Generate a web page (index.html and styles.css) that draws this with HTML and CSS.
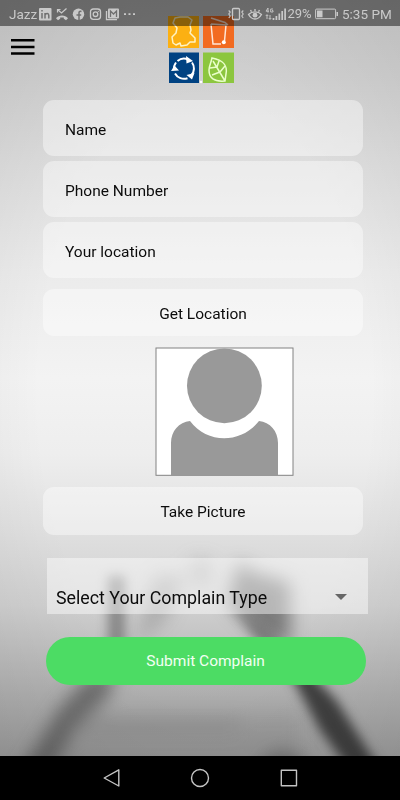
FILE: index.html
```
<!DOCTYPE html>
<html lang="en">
<head>
<meta charset="utf-8">
<title>Submit Complain</title>
<link rel="stylesheet" href="styles.css">
</head>
<body>
<div class="screen">
  <svg class="backdrop" viewBox="0 0 400 756" aria-hidden="true">
    <defs>
      <linearGradient id="sky" x1="0" y1="0" x2="0" y2="1">
        <stop offset="0" stop-color="#c9c9c9"/>
        <stop offset=".1" stop-color="#d1d1d1"/>
        <stop offset=".22" stop-color="#dedede"/>
        <stop offset=".36" stop-color="#ebebeb"/>
        <stop offset=".5" stop-color="#f3f3f3"/>
        <stop offset=".6" stop-color="#eeeeee"/>
        <stop offset=".7" stop-color="#e0e0e0"/>
        <stop offset=".8" stop-color="#d0d0d0"/>
        <stop offset=".9" stop-color="#b4b4b4"/>
        <stop offset="1" stop-color="#989898"/>
      </linearGradient>
      <radialGradient id="edge" gradientUnits="userSpaceOnUse" cx="0" cy="0" r="1" gradientTransform="translate(205 390) scale(330 580)">
        <stop offset=".5" stop-color="#000" stop-opacity="0"/>
        <stop offset="1" stop-color="#000" stop-opacity=".08"/>
      </radialGradient>
      <filter id="soft" x="-50%" y="-50%" width="200%" height="200%" color-interpolation-filters="sRGB"><feGaussianBlur stdDeviation="9"/></filter>
      <filter id="mid" x="-50%" y="-50%" width="200%" height="200%" color-interpolation-filters="sRGB"><feGaussianBlur stdDeviation="6"/></filter>
    </defs>
    <rect width="400" height="756" fill="url(#sky)"/>
    <rect width="400" height="756" fill="url(#edge)"/>
    <g filter="url(#soft)">
      <path d="M18 776L60 708L88 676L116 670L108 698L76 724L50 776Z" fill="#333" opacity=".55"/>
      <path d="M60 714H300V780H60Z" fill="#555" opacity=".13"/>
      <path d="M75 716H240V734H75Z" fill="#555" opacity=".13"/>
      <path d="M238 562L252 572L290 583V645L262 636L228 602Z" fill="#444" opacity=".6"/>
      <path d="M155 575H185L165 620L135 645Z" fill="#555" opacity=".28"/>
      <path d="M190 560H212V585H190Z" fill="#777" opacity=".3"/>
      <ellipse cx="283" cy="766" rx="22" ry="14" fill="#333" opacity=".4"/>
    </g>
    <g filter="url(#mid)">
      <path d="M108 576H125V665H108Z" fill="#555" opacity=".58"/>
      <path d="M285 664L308 671L336 700L384 776H354L320 730Z" fill="#262626" opacity=".82"/>
      <path d="M232 606L262 628L316 672L310 688L268 656Z" fill="#333" opacity=".4"/>
    </g>
  </svg>

  <header class="appbar">
    <svg class="menu" viewBox="0 0 24 18"><path d="M0 2.3H23.5M0 8.9H23.5M0 15.5H23.5" stroke="#000" stroke-width="2.5"/></svg>
    <svg class="logo" viewBox="0 0 68 68" fill="none" stroke="#fff">
      <path d="M0 0H31V32H0Z" fill="#fcb012" stroke="none"/>
      <path d="M35 0H66V32H35Z" fill="#f26b21" stroke="none"/>
      <path d="M1 36.5H31V67H1Z" fill="#004282" stroke="none"/>
      <path d="M35 36.5H66V67H35Z" fill="#8cc63f" stroke="none"/>
      <path d="M7 2L12 1L20 1L24 4L22 9L23 14L22 17L27 22L27 26L22 26L19 29L13 30L12 27L8 29L5 27L4 21L8 17L9 12L5 7Z" stroke="#fff3c4" stroke-width="1.5" stroke-linejoin="round"/>
      <path d="M43 8L45 28H53M43 8L58 9L56.500 25M43 2L57 6.500L60 9" stroke="#ffe5d5" stroke-width="1.5"/>
      <circle cx="55.8" cy="26.3" r="2" fill="#fff" stroke="none"/>
      <path d="M9.500 45A10 10 0 0 1 20 43.500M24 46.500A10 10 0 0 1 23.500 59M19.500 62.200A10.300 10.300 0 0 1 7 57.500M6 54A10 10 0 0 1 8 46.500" stroke-width="2"/>
      <path d="M18 40L25 45L18.500 47.500ZM26.500 57L24 63.500L18.500 59ZM3 55L6.500 49.500L11 54.500Z" fill="#fff" stroke="none"/>
      <path d="M44 42C54 44 60 48 58 58L57 65C46 66 41 62 41 54C41 50 43 47 44 42ZM45 45L57 65M49 51L42 52M52 56L44 59M49 51L51 45M52 56L57 50" stroke="#eaffca" stroke-width="1.5"/>
      <circle cx="33" cy="66" r="1.200" fill="#fff" stroke="none"/>
    </svg>
  </header>

  <main class="form">
    <div class="field">Name</div>
    <div class="field">Phone Number</div>
    <div class="field">Your location</div>
    <div class="btn">Get Location</div>
    <svg class="avatar" viewBox="0 0 139 129">
      <rect x="1" y="1" width="137" height="127.300" fill="#fff" stroke="#828282"/>
      <path d="M16 128V96C16 84 24 75 35 74C52 97 86 97 104 74C115 75 123 84 123 96V128Z" fill="#999"/>
      <circle cx="69.400" cy="38.800" r="37.400" fill="#999"/>
    </svg>
    <div class="btn">Take Picture</div>
    <div class="select"><span>Select Your Complain Type</span><svg class="caret" viewBox="0 0 12 6"><path d="M0 0H12L6 6Z" fill="#666"/></svg></div>
    <div class="submit">Submit Complain</div>
  </main>

  <nav class="navbar">
    <svg viewBox="0 0 20 20"><path d="M17.800 1.800V18L3.200 10Z"/></svg>
    <svg viewBox="0 0 20 20"><circle cx="10" cy="10" r="8.500"/></svg>
    <svg viewBox="0 0 20 20"><path d="M2.300 2.300H17.500V17.700H2.300Z"/></svg>
  </nav>

  <div class="status">
    <span class="carrier">Jazz</span>
    <svg class="notices" viewBox="0 0 98 14" fill="none" stroke="#c9c9c9">
      <rect x="0" y="1" width="12.500" height="12.500" rx="1" fill="#c9c9c9" stroke="none"/>
      <path d="M3 6V11.500M3 3V4.500M6 11.500V6M6 8C7 6 9.800 6 9.800 8.500V11.500" stroke="#707070" stroke-width="1.500"/>
      <path d="M18.500 2.500L22.500 6L27.500 1.500M18.500 5.500V2.500H21.500" stroke-width="1.200"/>
      <path d="M17 11.300C20 7.600 26 7.600 29 11.300L27 13.200L24.800 11.700V10.400H21.200V11.700L19 13.200Z" fill="#c9c9c9" stroke="none"/>
      <circle cx="39.500" cy="7.200" r="5.700" fill="#c9c9c9" stroke="none"/>
      <path d="M40 13V5.800C40 4.500 41 4.200 42.500 4.400M37.500 8H42.200" stroke="#707070" stroke-width="1.500"/>
      <rect x="51.500" y="2" width="10" height="10.400" rx="2.800" stroke-width="1.300"/>
      <circle cx="56.500" cy="7.200" r="2.300" stroke-width="1.300"/>
      <circle cx="59.300" cy="4.300" r=".6" fill="#c9c9c9" stroke="none"/>
      <path d="M67.500 4V12.700H78" stroke-width="1.300"/>
      <rect x="69" y="1.500" width="11" height="10" rx="1" fill="#c9c9c9" stroke="none"/>
      <path d="M71.500 10V4L74.500 7L77.500 4V10" stroke="#707070" stroke-width="1.300"/>
      <path d="M85 7.200H87M89.500 7.200H91.500M94 7.200H96" stroke-width="1.800"/>
    </svg>
    <svg class="signals" viewBox="0 0 59 14" fill="none" stroke="#c9c9c9">
      <rect x="4.500" y="1.500" width="7" height="11" rx="1" stroke-width="1.300"/>
      <path d="M.7 3.500L2.200 5L.8 7L2.200 9L.8 11M15.300 3.500L13.800 5L15.200 7L13.800 9L15.200 11" stroke-width="1.100"/>
      <path d="M20.500 7.500C24 4 30 4 33.500 7.500C30 13.500 24 13.500 20.500 7.500ZM27 2V4M22.500 3L23.500 4.700M31.500 3L30.500 4.700" stroke-width="1.300"/>
      <circle cx="27" cy="8.200" r="2.400" fill="#c9c9c9" stroke="none"/>
      <path d="M40 5.600V1L38 4.200H41M45 2H42.700V5H45V3.600H44M39 12V8M37.800 9L39 7.600L40.200 9M42 8V12M40.800 11L42 12.500L43.200 11" stroke-width=".9"/>
      <path d="M45.500 11V13M48.400 9V13M51.300 6.500V13M54.200 4V13M57.100 1.500V13" stroke-width="1.700"/>
    </svg>
    <span class="percent">29%</span>
    <svg class="battery" viewBox="0 0 24 12"><rect x=".6" y="1.100" width="20" height="9.600" rx="1" fill="none" stroke="#c9c9c9"/><path d="M2 2.500H7.500V9.300H2ZM21.500 4H23V8H21.500Z" fill="#c9c9c9"/></svg>
    <span class="clock">5:35 PM</span>
  </div>
</div>
</body>
</html>
```

FILE: styles.css
```
* { box-sizing: border-box; }
body { margin: 0; font-family: Roboto, "Liberation Sans", sans-serif; color: #0c0c0c; }
svg { display: block; flex: none; }
.screen { position: relative; width: 400px; height: 800px; overflow: hidden; display: flex; flex-direction: column; }
.backdrop { position: absolute; left: 0; top: 0; width: 400px; height: 756px; z-index: -1; }
.appbar { height: 100px; padding: 16px 0 0 11px; display: flex; align-items: flex-start; flex: none; }
.menu { width: 24px; height: 18px; margin-top: 22px; }
.logo { width: 68px; height: 68px; margin-left: 133px; }
.form { flex: 1; padding-left: 43px; display: flex; flex-direction: column; align-items: flex-start; }
.field { width: 320px; height: 55.500px; margin-bottom: 5.700px; padding: 4px 22px 0; border-radius: 11px; background: rgba(255,255,255,.42); display: flex; align-items: center; font-size: 15.500px; }
.btn { width: 320px; height: 47.500px; border-radius: 11px; background: rgba(255,255,255,.42); display: flex; align-items: center; justify-content: center; font-size: 15.500px; padding-top: 2px; }
.field + .btn { margin-top: 5.400px; }
.avatar { width: 139px; height: 129px; margin: 11px 0 11px 112px; }
.select { width: 321px; height: 56px; margin: 23px 0 0 4px; padding: 23px 21px 0 9px; background: rgba(255,255,255,.45); display: flex; align-items: center; justify-content: space-between; font-size: 17.800px; }
.caret { width: 12px; height: 6px; }
.submit { width: 320px; height: 48px; margin: 23px 0 0 2.600px; padding-top: 1px; border-radius: 24px; background: #4cdc64; color: #f2fff2; display: flex; align-items: center; justify-content: center; font-size: 15.500px; }
.navbar { height: 44px; background: #000; display: flex; align-items: center; justify-content: center; gap: 69px; flex: none; }
.navbar svg { width: 20px; height: 20px; fill: none; stroke: #c4c4c4; stroke-width: 1.400; stroke-linejoin: round; }
.status { position: absolute; left: 0; top: 0; width: 400px; height: 26px; padding: 1px 0 0 9px; background: rgba(0,0,0,.46); color: #c9c9c9; display: flex; align-items: center; font-size: 13.500px; }
.carrier { width: 29.500px; }
.notices { width: 98px; height: 14px; }
.signals { width: 59px; height: 14px; margin-left: 91px; }
.percent { width: 27.500px; margin-left: 1px; white-space: nowrap; font-size: 13px; }
.battery { width: 24px; height: 12px; }
.clock { margin-left: 3px; white-space: nowrap; }
```
